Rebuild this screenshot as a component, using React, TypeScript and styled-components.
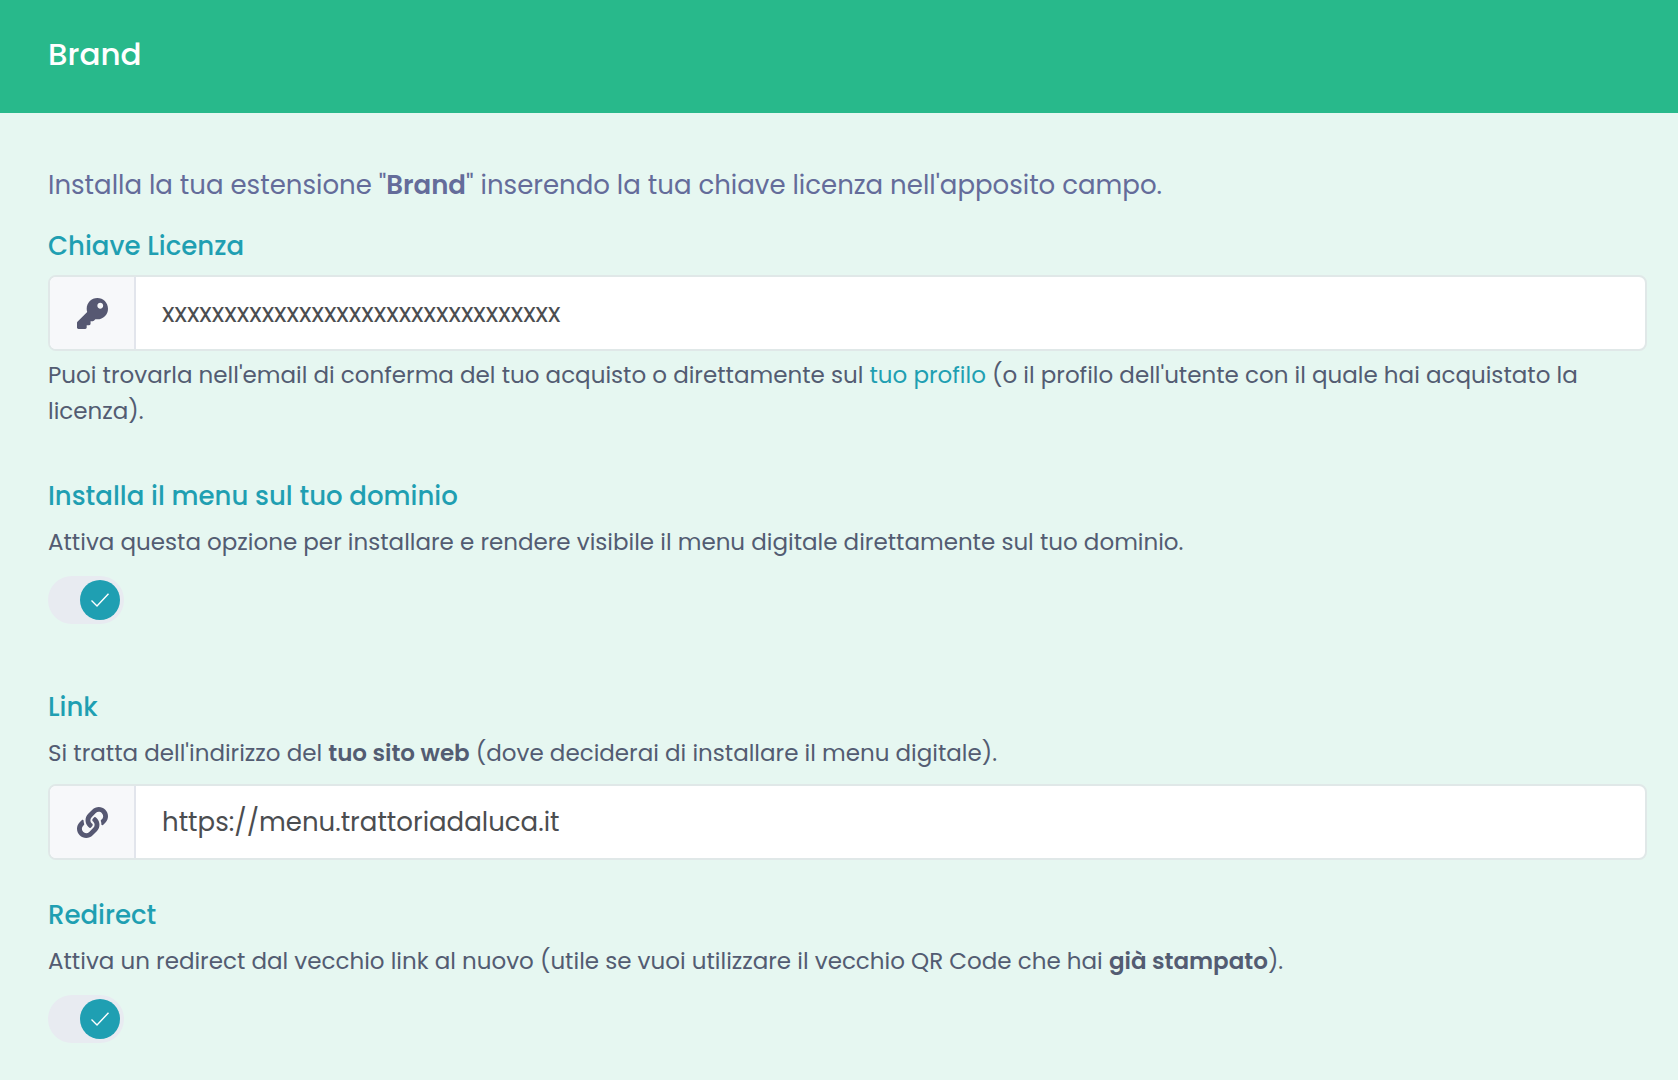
import React, { useId, useState } from "react";
import styled, { createGlobalStyle } from "styled-components";
import { FaKey, FaLink } from "react-icons/fa";

const GlobalStyle = createGlobalStyle`
  *, *::before, *::after { box-sizing: border-box; }
  body {
    margin: 0;
    background: #e6f7f1;
    font-family: Poppins, Inter, "Open Sans", sans-serif;
    font-size: 26px;
    line-height: 36px;
    color: #535c72;
    -webkit-font-smoothing: antialiased;
  }
  strong { font-weight: 600; }
`;

const Header = styled.header`
  display: flex;
  align-items: center;
  padding: 30px 48px 35px;
  background: #28b98b;
`;

const Title = styled.h1`
  margin: 0;
  font-size: 31px;
  font-weight: 500;
  line-height: 48px;
  color: #fff;
`;

const Form = styled.form`
  display: flex;
  flex-direction: column;
  padding: 54px 31px 36px 48px;
`;

const Intro = styled.p`
  margin: 0 0 25px;
  color: #646c9a;
`;

const Field = styled.div<{ $gapAfter?: number }>`
  display: flex;
  flex-direction: column;
  align-items: flex-start;
  margin-bottom: ${(p) => p.$gapAfter ?? 0}px;
`;

const Label = styled.label`
  font-weight: 500;
  color: #1f9fb2;
`;

const Help = styled.p<{ $before?: number }>`
  margin: ${(p) => p.$before ?? 10}px 0 0;
  font-size: 23px;
`;

const ProfileLink = styled.a`
  color: #1f9fb2;
  text-decoration: none;
`;

const InputGroup = styled.div<{ $before: number }>`
  display: flex;
  align-self: stretch;
  height: 76px;
  margin-top: ${(p) => p.$before}px;
  border: 2px solid #e0e8e8;
  border-radius: 8px;
  background: #fff;
  overflow: hidden;
`;

const Addon = styled.span`
  display: flex;
  align-items: center;
  justify-content: center;
  width: 86px;
  border-right: 2px solid #e2e5ec;
  background: #f7f8fa;
  color: #565872;
  font-size: 31px;
`;

const TextInput = styled.input`
  flex: 1;
  min-width: 0;
  padding: 0 26px;
  border: 0;
  outline: 0;
  background: transparent;
  font: inherit;
  color: #4b4d50;
`;

const Track = styled.label`
  display: flex;
  align-items: center;
  width: 76px;
  height: 48px;
  margin-top: 16px;
  padding: 4px;
  border-radius: 24px;
  background: #e8ebf1;
  cursor: pointer;
`;

const HiddenCheck = styled.input`
  appearance: none;
  width: 0;
  height: 0;
  margin: 0;
`;

const Knob = styled.span<{ $on: boolean }>`
  display: flex;
  align-items: center;
  justify-content: center;
  width: 40px;
  height: 40px;
  margin-left: ${(p) => (p.$on ? "auto" : "0")};
  border-radius: 50%;
  background: ${(p) => (p.$on ? "#1f9fb2" : "#fff")};
`;

function Toggle({ id }: { id: string }) {
  const [on, setOn] = useState(true);
  return (
    <Track>
      <HiddenCheck id={id} type="checkbox" checked={on} onChange={(e) => setOn(e.target.checked)} />
      <Knob $on={on}>
        <svg width="20" height="16" viewBox="0 0 20 16" fill="none" stroke="#fff" strokeWidth="1.4" aria-hidden="true">
          <path d="M1.5 8.5 L7 14 L18.5 1.8" />
        </svg>
      </Knob>
    </Track>
  );
}

export default function App() {
  const id = useId();
  const [licence, setLicence] = useState("x".repeat(32));
  const [link, setLink] = useState("https://menu.trattoriadaluca.it");

  return (
    <>
      <GlobalStyle />
      <Header>
        <Title>Brand</Title>
      </Header>
      <Form>
        <Intro>
          Installa la tua estensione "<strong>Brand</strong>" inserendo la tua chiave licenza nell'apposito campo.
        </Intro>

        <Field $gapAfter={49}>
          <Label htmlFor={`${id}-licence`}>Chiave Licenza</Label>
          <InputGroup $before={11}>
            <Addon><FaKey /></Addon>
            <TextInput id={`${id}-licence`} type="text" value={licence} onChange={(e) => setLicence(e.target.value)} />
          </InputGroup>
          <Help $before={6}>
            Puoi trovarla nell'email di conferma del tuo acquisto o direttamente sul{" "}
            <ProfileLink href="#profilo">tuo profilo</ProfileLink> (o il profilo dell'utente con il quale hai
            acquistato la licenza).
          </Help>
        </Field>

        <Field $gapAfter={65}>
          <Label htmlFor={`${id}-domain`}>Installa il menu sul tuo dominio</Label>
          <Help>
            Attiva questa opzione per installare e rendere visibile il menu digitale direttamente sul tuo dominio.
          </Help>
          <Toggle id={`${id}-domain`} />
        </Field>

        <Field $gapAfter={37}>
          <Label htmlFor={`${id}-link`}>Link</Label>
          <Help>
            Si tratta dell'indirizzo del <strong>tuo sito web</strong> (dove deciderai di installare il menu digitale).
          </Help>
          <InputGroup $before={13}>
            <Addon><FaLink /></Addon>
            <TextInput id={`${id}-link`} type="text" value={link} onChange={(e) => setLink(e.target.value)} />
          </InputGroup>
        </Field>

        <Field>
          <Label htmlFor={`${id}-redirect`}>Redirect</Label>
          <Help>
            Attiva un redirect dal vecchio link al nuovo (utile se vuoi utilizzare il vecchio QR Code che hai{" "}
            <strong>già stampato</strong>).
          </Help>
          <Toggle id={`${id}-redirect`} />
        </Field>
      </Form>
    </>
  );
}
